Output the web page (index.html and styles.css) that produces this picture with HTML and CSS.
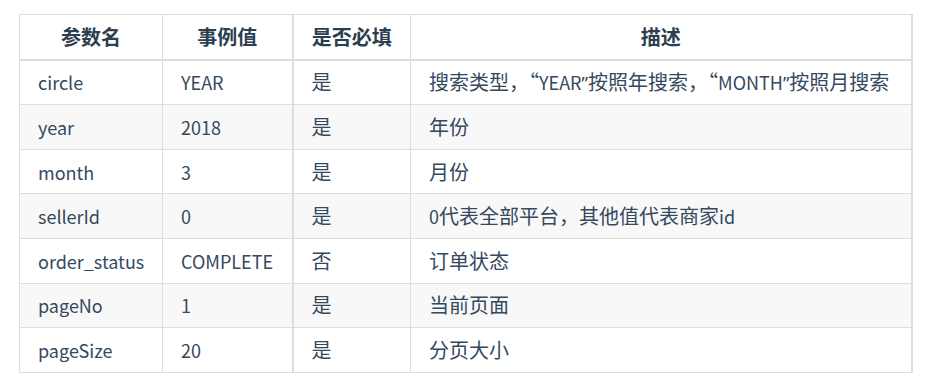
FILE: index.html
```html
<!DOCTYPE html>
<html lang="zh-CN">
<head>
<meta charset="utf-8">
<link rel="stylesheet" href="styles.css">
</head>
<body>
<table class="params">
  <colgroup>
    <col class="c1"><col class="c2"><col class="c3"><col class="c4">
  </colgroup>
  <thead>
    <tr><th>参数名</th><th>事例值</th><th class="sep">是否必填</th><th>描述</th></tr>
  </thead>
  <tbody>
    <tr><td class="lat">circle</td><td class="lat">YEAR</td><td class="sep">是</td><td>搜索类型，“<span class="lat">YEAR</span><span class="rq">”</span>按照年搜索，“<span class="lat">MONTH</span><span class="rq">”</span>按照月搜索</td></tr>
    <tr><td class="lat">year</td><td class="lat">2018</td><td class="sep">是</td><td>年份</td></tr>
    <tr><td class="lat">month</td><td class="lat">3</td><td class="sep">是</td><td>月份</td></tr>
    <tr><td class="lat">sellerId</td><td class="lat">0</td><td class="sep">是</td><td><span class="lat">0</span>代表全部平台，其他值代表商家<span class="lat">id</span></td></tr>
    <tr><td class="lat">order_status</td><td class="lat">COMPLETE</td><td class="sep">否</td><td>订单状态</td></tr>
    <tr><td class="lat">pageNo</td><td class="lat">1</td><td class="sep">是</td><td>当前页面</td></tr>
    <tr><td class="lat">pageSize</td><td class="lat">20</td><td class="sep">是</td><td>分页大小</td></tr>
  </tbody>
</table>
</body>
</html>
```

FILE: styles.css
```css
html, body {
  margin: 0;
  padding: 0;
  background: #ffffff;
}
body {
  padding: 14px 0 0 19px;
  font-family: "Noto Sans CJK SC", "Noto Sans", sans-serif;
  color: #34495e;
}
.params {
  border-collapse: collapse;
  table-layout: fixed;
  width: 892px;
  font-size: 20px;
  border-right: 2px solid #dddddd;
}
.c1 { width: 143px; }
.c2 { width: 130px; }
.c3 { width: 118px; }
.c4 { width: 501px; }
.params th, .params td {
  border: 1px solid #dddddd;
  padding: 0 0 0 18px;
  height: 43.6px;
  text-align: left;
  vertical-align: middle;
  white-space: nowrap;
  line-height: 1;
}
.params th {
  font-weight: 700;
  text-align: center;
  padding: 0;
  color: #2c3e50;
  border-bottom: 2px solid #dddddd;
}
.params .sep {
  border-left: 2px solid #dddddd;
}
.params td .lat {
  font-size: 0.9em;
}
.params td.lat {
  font-size: 18px;
}
.rq {
  font-family: "Noto Sans", "DejaVu Sans", sans-serif;
  font-size: 18px;
}
.params tbody tr:nth-child(2n) {
  background: #f8f8f8;
}
```
